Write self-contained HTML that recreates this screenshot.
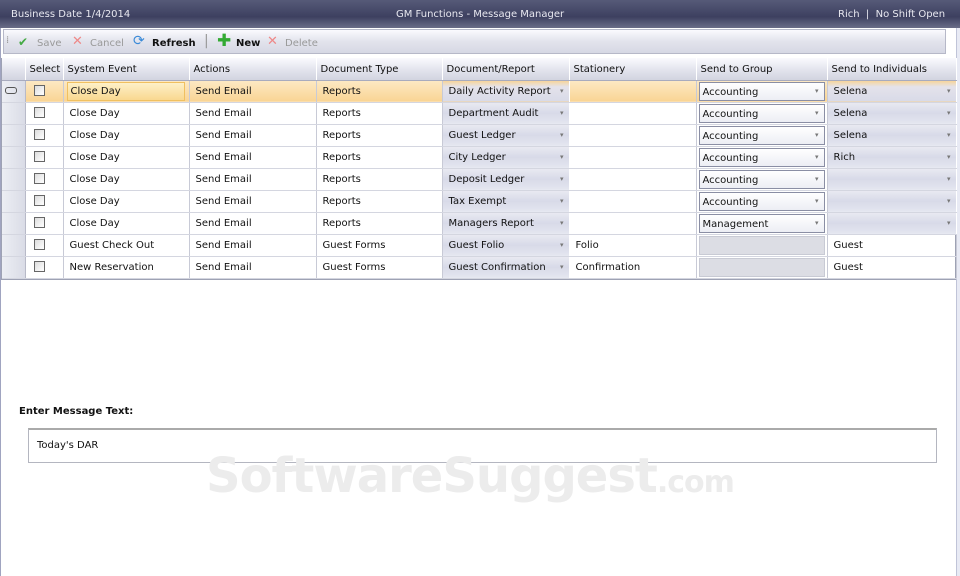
<!DOCTYPE html>
<html><head><meta charset="utf-8"><style>
*{box-sizing:border-box;margin:0;padding:0}
body{width:960px;height:576px;background:#fff;font-family:"DejaVu Sans","Liberation Sans",sans-serif;font-size:10px;color:#111;position:relative;overflow:hidden}
.title{position:absolute;left:0;top:0;width:960px;height:28px;background:linear-gradient(#565a78,#3d4060 60%,#6a6d88);color:#e8e8f0;font-size:10px}
.title span{position:absolute;top:9px}
.tb{position:absolute;left:3px;top:29px;width:943px;height:25px;border:1px solid #b6b8c8;background:linear-gradient(#fafafe,#e2e3ec 50%,#d6d8e4);}
.tb span{position:absolute;top:8px;font-size:10px}
.grid{position:absolute;left:1px;top:58px;width:955px;border:1px solid #9ea2b4;border-top:none}
table{border-collapse:collapse;table-layout:fixed;width:954px}
td{height:22px;border-right:1px solid #c8cad6;border-bottom:1px solid #d4d6e0;padding:1px 6px 0;white-space:nowrap;overflow:hidden}
tr.h td{height:22px;background:linear-gradient(#fafafe,#e4e5ee 50%,#d2d4e0);border-right:1px solid #fff;border-bottom:1px solid #a8abbe;padding-left:4px}
td.ind{background:linear-gradient(90deg,#eceef4,#dadce6);border-right:1px solid #b8bac8}
td.dd{background:linear-gradient(#e9eaf2,#d8dae8 50%,#e4e6f0);position:relative;border-right:1px solid #fff}
td.dd:after{content:"▾";position:absolute;right:5px;top:6px;font-size:7px;color:#777}
td.g{padding:1px 2px}
.box{height:19px;border:1px solid #8a8ea4;background:linear-gradient(#fff,#eceef4);padding:4px 3px;position:relative}
.box:after{content:"▾";position:absolute;right:5px;top:4px;font-size:7px;color:#777}
.dis{height:19px;border:1px solid #c8cad4;background:#dcdde4}
tr.sel td{background:linear-gradient(#fde9c4,#f9d494)}
tr.sel td.ind{background:linear-gradient(90deg,#eceef4,#dadce6)}
tr.sel td.dd{background:linear-gradient(#f9d494,#e4e2ea 30%,#d8dae8)}
.cb{display:inline-block;width:11px;height:11px;border:1px solid #666;background:linear-gradient(135deg,#ddd,#fff);margin-left:8px;vertical-align:middle}
</style></head><body>
<div style="position:absolute;left:0;top:28px;width:1px;height:548px;background:#a0a4c0"></div>
<div style="position:absolute;right:0;top:28px;width:4px;height:548px;background:#e8eaf4;border-left:1px solid #c0c4d8"></div>
<div class="title"><span style="left:11px">Business Date 1/4/2014</span><span style="left:396px">GM Functions - Message Manager</span><span style="left:838px">Rich &nbsp;| &nbsp;No Shift Open</span></div>
<div class="tb">
<span style="left:2px;top:5px;color:#999">⁞</span>
<span style="left:14px;top:5px;color:#4a4;font-size:12px">✔</span><span style="left:33px;color:#999">Save</span>
<span style="left:68px;top:4px;color:#e88;font-size:13px">✕</span><span style="left:86px;color:#999">Cancel</span>
<span style="left:129px;top:3px;color:#3a8ad8;font-size:14px">⟳</span><span style="left:148px;color:#111;font-weight:bold">Refresh</span>
<span style="left:200px;top:3px;color:#999;font-size:14px">|</span>
<span style="left:213px;top:1px;color:#3a3;font-size:17px;font-weight:bold">✚</span><span style="left:232px;font-weight:bold">New</span>
<span style="left:263px;top:4px;color:#e88;font-size:13px">✕</span><span style="left:281px;color:#999">Delete</span>
</div>
<div class="grid"><table>
<colgroup><col style="width:23px"><col style="width:38px"><col style="width:126px"><col style="width:127px"><col style="width:126px"><col style="width:127px"><col style="width:127px"><col style="width:131px"><col style="width:129px"></colgroup>
<tr class="h"><td class="ind"></td><td>Select</td><td>System Event</td><td>Actions</td><td>Document Type</td><td>Document/Report</td><td>Stationery</td><td>Send to Group</td><td>Send to Individuals</td></tr>
<tr class="sel"><td class="ind"><span style="display:inline-block;width:12px;height:7px;border:1px solid #555;border-radius:3px;margin-left:-3px"></span></td><td style="padding:0"><span class="cb"></span></td><td style="padding:1px 3px"><div style="height:19px;width:118px;border:1px solid #f0c060;background:linear-gradient(#fdf0c8,#f9d890);padding:3px 3px">Close Day</div></td><td>Send Email</td><td>Reports</td><td class="dd">Daily Activity Report</td><td></td><td class="g"><div class="box">Accounting</div></td><td class="dd">Selena</td></tr>
<tr><td class="ind"></td><td style="padding:0"><span class="cb"></span></td><td>Close Day</td><td>Send Email</td><td>Reports</td><td class="dd">Department Audit</td><td></td><td class="g"><div class="box">Accounting</div></td><td class="dd">Selena</td></tr>
<tr><td class="ind"></td><td style="padding:0"><span class="cb"></span></td><td>Close Day</td><td>Send Email</td><td>Reports</td><td class="dd">Guest Ledger</td><td></td><td class="g"><div class="box">Accounting</div></td><td class="dd">Selena</td></tr>
<tr><td class="ind"></td><td style="padding:0"><span class="cb"></span></td><td>Close Day</td><td>Send Email</td><td>Reports</td><td class="dd">City Ledger</td><td></td><td class="g"><div class="box">Accounting</div></td><td class="dd">Rich</td></tr>
<tr><td class="ind"></td><td style="padding:0"><span class="cb"></span></td><td>Close Day</td><td>Send Email</td><td>Reports</td><td class="dd">Deposit Ledger</td><td></td><td class="g"><div class="box">Accounting</div></td><td class="dd"></td></tr>
<tr><td class="ind"></td><td style="padding:0"><span class="cb"></span></td><td>Close Day</td><td>Send Email</td><td>Reports</td><td class="dd">Tax Exempt</td><td></td><td class="g"><div class="box">Accounting</div></td><td class="dd"></td></tr>
<tr><td class="ind"></td><td style="padding:0"><span class="cb"></span></td><td>Close Day</td><td>Send Email</td><td>Reports</td><td class="dd">Managers Report</td><td></td><td class="g"><div class="box">Management</div></td><td class="dd"></td></tr>
<tr><td class="ind"></td><td style="padding:0"><span class="cb"></span></td><td>Guest Check Out</td><td>Send Email</td><td>Guest Forms</td><td class="dd">Guest Folio</td><td>Folio</td><td class="g"><div class="dis"></div></td><td>Guest</td></tr>
<tr><td class="ind"></td><td style="padding:0"><span class="cb"></span></td><td>New Reservation</td><td>Send Email</td><td>Guest Forms</td><td class="dd">Guest Confirmation</td><td>Confirmation</td><td class="g"><div class="dis"></div></td><td>Guest</td></tr>
</table></div>
<div style="position:absolute;left:19px;top:406px;font-weight:bold;font-size:10px">Enter Message Text:</div>
<div style="position:absolute;left:28px;top:428px;width:909px;height:35px;border:1px solid #b4b6c0;border-top:2px solid #aaa;padding:10px 8px;font-size:10px">Today's DAR</div>
<div style="position:absolute;left:206px;top:448px;font-family:'DejaVu Sans',sans-serif;font-weight:bold;font-size:48px;color:#ececec;letter-spacing:-1px;white-space:nowrap">SoftwareSuggest<span style="font-size:30px">.com</span></div>
</body></html>
